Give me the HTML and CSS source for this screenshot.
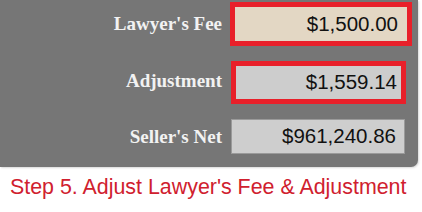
FILE: index.html
```html
<!DOCTYPE html>
<html lang="en">
<head>
<meta charset="utf-8">
<link rel="stylesheet" href="styles.css">
<title>Step 5</title>
</head>
<body>
<div id="panel">
  <div class="row row-fee">
    <div class="label">Lawyer's Fee</div>
    <div class="field fee">$1,500.00</div>
  </div>
  <div class="row row-adj">
    <div class="label">Adjustment</div>
    <div class="field adj">$1,559.14</div>
  </div>
  <div class="row row-net">
    <div class="label">Seller's Net</div>
    <div class="field net">$961,240.86</div>
  </div>
</div>
<div class="caption">Step 5. Adjust Lawyer's Fee &amp; Adjustment</div>
</body>
</html>
```
FILE: styles.css
```css
body {
  margin: 0;
  padding: 0;
  background: #fff;
}
#panel {
  width: 418px;
  height: 167px;
  box-sizing: border-box;
  padding-top: 2px;
  background-color: #767676;
  border-bottom-right-radius: 7px;
  box-shadow: 1px 1px 2px rgba(0,0,0,0.15);
  display: flex;
  flex-direction: column;
  gap: 15px;
}
.row {
  display: flex;
  align-items: center;
}
.label {
  width: 222px;
  text-align: right;
  font-family: "Liberation Serif", serif;
  font-weight: bold;
  font-size: 19px;
  color: #f2f2f2;
}
.field {
  box-sizing: border-box;
  font-family: "Liberation Sans", Arial, sans-serif;
  font-size: 20.5px;
  color: #111;
  text-align: right;
  line-height: 1;
  display: flex;
  align-items: center;
  justify-content: flex-end;
}
.fee {
  margin-left: 8px;
  width: 182px;
  height: 44px;
  border: 5px solid #e8202a;
  background-color: #e3d7c4;
  padding-right: 9px;
}
.adj {
  margin-left: 9px;
  width: 175px;
  height: 43px;
  border: 5px solid #e8202a;
  background-color: #cdcdcd;
  padding-right: 4px;
}
.row-adj .label { margin-top: -4px; }
.net {
  margin-left: 9px;
  width: 174px;
  height: 35px;
  border: 1px solid #9a9a9a;
  background-color: #cecece;
  padding-right: 8px;
}
.caption {
  padding: 8px 0 0 10px;
  font-family: "Liberation Sans", Arial, sans-serif;
  font-size: 21.4px;
  color: #d0202e;
}
```
